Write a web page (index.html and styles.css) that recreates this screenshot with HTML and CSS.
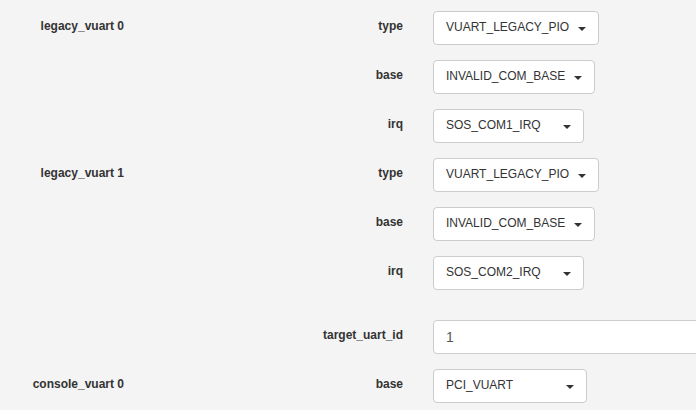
FILE: index.html
```html
<!DOCTYPE html>
<html>
<head>
<meta charset="utf-8">
<link rel="stylesheet" href="styles.css">
</head>
<body>
<div class="page">
  <section class="group">
    <div class="group-label">legacy_vuart 0</div>
    <div class="fields">
      <div class="field">
        <label class="field-label">type</label>
        <div class="control"><div class="select w-type"><span>VUART_LEGACY_PIO</span><i class="caret"></i></div></div>
      </div>
      <div class="field">
        <label class="field-label">base</label>
        <div class="control"><div class="select w-base"><span>INVALID_COM_BASE</span><i class="caret"></i></div></div>
      </div>
      <div class="field">
        <label class="field-label">irq</label>
        <div class="control"><div class="select w-irq"><span>SOS_COM1_IRQ</span><i class="caret"></i></div></div>
      </div>
    </div>
  </section>
  <section class="group">
    <div class="group-label">legacy_vuart 1</div>
    <div class="fields">
      <div class="field">
        <label class="field-label">type</label>
        <div class="control"><div class="select w-type"><span>VUART_LEGACY_PIO</span><i class="caret"></i></div></div>
      </div>
      <div class="field">
        <label class="field-label">base</label>
        <div class="control"><div class="select w-base"><span>INVALID_COM_BASE</span><i class="caret"></i></div></div>
      </div>
      <div class="field">
        <label class="field-label">irq</label>
        <div class="control"><div class="select w-irq"><span>SOS_COM2_IRQ</span><i class="caret"></i></div></div>
      </div>
      <div class="field spaced">
        <label class="field-label">target_uart_id</label>
        <div class="control"><input class="text-input" type="text" value="1"></div>
      </div>
    </div>
  </section>
  <section class="group">
    <div class="group-label">console_vuart 0</div>
    <div class="fields">
      <div class="field">
        <label class="field-label">base</label>
        <div class="control"><div class="select w-pci"><span>PCI_VUART</span><i class="caret"></i></div></div>
      </div>
    </div>
  </section>
</div>
</body>
</html>
```
FILE: styles.css
```css
html, body {
  margin: 0;
  padding: 0;
  background: #f4f4f4;
  overflow: hidden;
}
body {
  font-family: "Liberation Sans", Arial, sans-serif;
  font-size: 12px;
  color: #333;
}
.page {
  padding-top: 11px;
  width: 696px;
  overflow: hidden;
}
.group {
  display: grid;
  grid-template-columns: 124px 1fr;
}
.group-label,
.field-label {
  font-weight: bold;
  font-size: 12px;
  line-height: 17px;
  padding-top: 7px;
  text-align: right;
  color: #333;
}
.field {
  display: grid;
  grid-template-columns: 279px 1fr;
  margin-bottom: 15px;
  min-height: 34px;
}
.field.spaced {
  margin-top: 30px;
}
.control {
  padding-left: 30px;
  display: flex;
}
.select {
  box-sizing: border-box;
  height: 34px;
  display: flex;
  align-items: flex-start;
  justify-content: space-between;
  padding: 7px 12px 0 12px;
  background: #fff;
  border: 1px solid #ccc;
  border-radius: 4px;
  line-height: 17px;
  font-size: 12px;
  color: #333;
  white-space: nowrap;
}
.caret {
  display: block;
  width: 0;
  height: 0;
  margin-top: 8px;
  border-top: 4px solid #333;
  border-left: 4px solid transparent;
  border-right: 4px solid transparent;
}
.w-type { width: 166px; }
.w-base { width: 162px; }
.w-irq { width: 151px; }
.w-pci { width: 154px; }
.text-input {
  box-sizing: border-box;
  height: 34px;
  width: 400px;
  flex: none;
  padding: 6px 12px;
  border: 1px solid #ccc;
  border-radius: 4px;
  background: #fff;
  font-family: "Liberation Sans", Arial, sans-serif;
  font-size: 14px;
  color: #555;
  outline: none;
}
```
